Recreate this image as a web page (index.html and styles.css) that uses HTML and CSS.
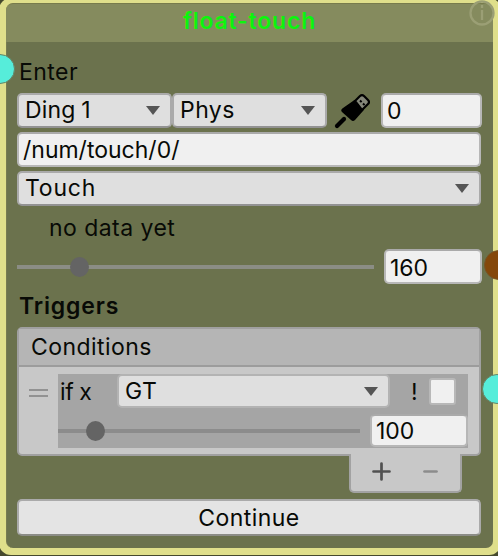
FILE: index.html
```html
<!DOCTYPE html>
<html lang="en">
<head>
<meta charset="utf-8">
<title>float-touch</title>
<link rel="stylesheet" href="styles.css">
</head>
<body>
<main class="node">
  <header class="title">float-touch
    <svg class="info" viewBox="0 0 26 26"><circle cx="13" cy="13" r="11.5"/><path d="M13 10v10M13 5v3"/></svg>
  </header>
  <section class="content">
    <div class="enter">Enter</div>
    <div class="source">
      <div class="field select half ding">Ding 1</div>
      <div class="field select half">Phys</div>
      <svg class="plug" viewBox="0 0 36 36">
        <path d="M3 33L10 26" stroke="#000" stroke-width="4.2" stroke-linecap="round"/>
        <path d="M9 15L19 8Q21 6 23 8L29 14Q31 16 29 18L21 27Q19 29 17 27L8 19Q6 17 9 15Z"/>
        <path d="M21 8L26 3Q28 1 30 3L34 7Q36 9 34 11L28 17Z" fill="#85877a" stroke="#000" stroke-width="2.2" stroke-linejoin="round"/>
        <path d="M26 7.500l1.600 1.600M29 10.500l1.600 1.600" stroke="#000" stroke-width="2"/>
      </svg>
      <div class="field input index">0</div>
    </div>
    <div class="field input path">/num/touch/0/</div>
    <div class="field select kind">Touch</div>
    <div class="status">no data yet</div>
    <div class="slider-row">
      <div class="track"><i class="thumb"></i></div>
      <div class="field input amount">160</div>
    </div>
    <h2 class="triggers">Triggers</h2>
    <div class="list">
      <div class="list-title">Conditions</div>
      <div class="list-body">
        <div class="handle"></div>
        <div class="condition">
          <div class="compare">
            <span class="ifx">if x</span>
            <div class="field select operator">GT</div>
            <span class="not">!</span>
            <div class="check"></div>
          </div>
          <div class="threshold">
            <div class="track"><i class="thumb"></i></div>
            <div class="field input limit">100</div>
          </div>
        </div>
      </div>
    </div>
    <div class="list-footer">
      <svg viewBox="0 0 108 38"><path d="M22.500 17.500h16M30.500 9.500v16" stroke="#515151"/><path d="M73.500 17.500h12" stroke="#8c8c8c"/></svg>
    </div>
    <div class="continue">Continue</div>
  </section>
  <i class="port port-in"></i>
  <i class="port port-value"></i>
  <i class="port port-out"></i>
</main>
</body>
</html>
```
FILE: styles.css
```css
* { box-sizing: border-box; }
body {
  margin: 0;
  height: 556px;
  overflow: hidden;
  background: #45492d;
  font: 23px/30px Inter, "Liberation Sans", sans-serif;
  letter-spacing: .45px;
  color: #080a06;
}
.node {
  position: relative;
  width: 502px;
  height: 557px;
  margin: -2px 0 0 -1px;
  padding: 5px 7px 8px;
  background: #dfdf8b;
  border-radius: 12px;
  overflow: hidden;
}
.title {
  position: relative;
  width: 487px;
  height: 39px;
  border-top: 1px solid #777b4c;
  border-radius: 7px 7px 0 0;
  background: #858b5e;
  color: #0df50d;
  font-weight: 600;
  letter-spacing: .8px;
  line-height: 34px;
  text-align: center;
}
.info {
  position: absolute;
  right: -2px;
  top: -4px;
  width: 26px;
  height: 26px;
  fill: none;
  stroke: #9b9f75;
  stroke-width: 2.3;
}
.content {
  width: 487px;
  height: 506px;
  padding: 0 12px 0 10px;
  background: #6b724d;
  border-radius: 0 0 7px 7px;
  border-left: 1px solid #777b51;
}
.enter { height: 51px; padding: 15px 0 0 2px; }
.source { display: flex; width: 465px; height: 35px; }
.field {
  position: relative;
  height: 35px;
  border: 2px solid #aaa;
  border-bottom-color: #929292;
  border-radius: 5px;
  line-height: 31px;
  white-space: nowrap;
}
.select { padding-left: 6px; background: #dfdfdf; }
.select::after {
  content: "";
  position: absolute;
  right: 10px;
  top: 11px;
  width: 14px;
  height: 9px;
  background: #555;
  clip-path: polygon(0 0, 100% 0, 50% 100%);
}
.input {
  padding-left: 4px;
  background: #f0f0f0;
  border-color: #aaa #b7b7b7 #b7b7b7;
  line-height: 33px;
  letter-spacing: 0;
}
.half { width: 155px; }
.ding { letter-spacing: .2px; word-spacing: -1px; }
.plug { width: 36px; height: 36px; margin-left: 7px; }
.index { width: 101px; margin-left: auto; }
.path { margin-top: 4px; }
.kind { margin-top: 4px; letter-spacing: .8px; }
.status { height: 43px; padding: 7px 0 0 32px; }
.slider-row { display: flex; align-items: center; width: 465px; height: 35px; justify-content: space-between; }
.track {
  display: flex;
  align-items: center;
  width: 357px;
  height: 4px;
  padding-left: 53px;
  background: #8b8d85;
}
.thumb { flex: none; width: 19px; height: 20px; border-radius: 50%; background: #646464; }
.amount { width: 98px; line-height: 34px; }
.triggers { height: 43px; margin: 0; padding: 7px 0 0 2px; font-size: 23px; line-height: 30px; font-weight: 600; letter-spacing: .85px; }
.list {
  height: 129px;
  border: 2px solid #a0a0a0;
  border-radius: 5px;
  background: #c8c8c8;
}
.list-title { height: 38px; padding: 3px 0 0 12px; border-bottom: 2px solid #9c9c9c; background: #b5b5b5; }
.list-body { display: flex; padding: 7px 11px 0 10px; }
.handle { width: 19px; height: 8px; margin: 15px 10px 0 0; border: solid #929292; border-width: 2px 0; }
.condition { flex: 1; height: 74px; background: #a5a5a5; }
.compare { display: flex; height: 36px; }
.ifx { width: 59px; padding: 3px 0 0 2px; letter-spacing: -.4px; }
.operator { width: 273px; height: 34px; border-color: #b3b3b3; }
.not { width: 18px; margin-left: 21px; padding-top: 3px; }
.check { width: 27px; height: 27px; margin-top: 4px; border: 2px solid #b8b8b8; border-radius: 3px; background: #f0f0f0; }
.threshold { display: flex; justify-content: space-between; align-items: center; height: 41px; }
.threshold .track { width: 302px; padding-left: 28px; background: #8c8c8c; }
.limit { width: 98px; height: 33px; line-height: 31px; }
.list-footer {
  position: relative;
  width: 113px;
  height: 39px;
  margin: -2px 19px 0 auto;
  border: 2px solid #a2a2a2;
  border-top: 0;
  border-radius: 0 0 5px 5px;
  background: #c8c8c8;
}
.list-footer svg { display: block; width: 108px; height: 38px; fill: none; stroke-width: 2.7; stroke-linecap: round; }
.continue {
  height: 37px;
  margin-top: 6px;
  border: 2px solid #aaa;
  border-bottom-color: #8b8c86;
  border-radius: 5px;
  background: #e4e4e4;
  line-height: 34px;
  text-align: center;
}
.port { position: absolute; width: 30px; height: 30px; border-radius: 50%; border: 1px solid #668365; background: #56edda; }
.port-in { left: -14px; top: 56px; }
.port-value { left: 485px; top: 252px; background: #84470a; border-color: #765326; }
.port-out { left: 483px; top: 376px; }
```
